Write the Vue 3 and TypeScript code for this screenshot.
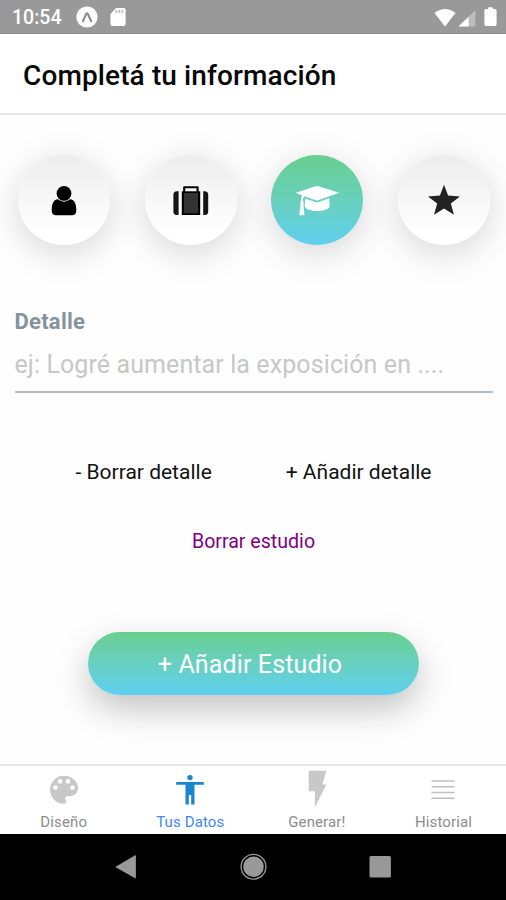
<script setup lang="ts">
import { ref } from 'vue'

type Section = 'person' | 'work' | 'study' | 'extra'
type Tab = 'design' | 'data' | 'generate' | 'history'

const sections: { id: Section; label: string }[] = [
  { id: 'person', label: 'Datos personales' },
  { id: 'work', label: 'Experiencia' },
  { id: 'study', label: 'Estudios' },
  { id: 'extra', label: 'Destacados' },
]
const tabs: { id: Tab; label: string }[] = [
  { id: 'design', label: 'Diseño' },
  { id: 'data', label: 'Tus Datos' },
  { id: 'generate', label: 'Generar!' },
  { id: 'history', label: 'Historial' },
]

const section = ref<Section>('study')
const tab = ref<Tab>('data')
const detail = ref('')
</script>

<template>
  <div class="screen">
    <div class="status">
      <span class="clock">10:54</span>
      <svg class="expo" viewBox="0 0 22 22">
        <circle cx="11" cy="11" r="10.6" fill="#fff" />
        <path d="M7 15.2 10 8.2Q11 6.4 12 8.2L15.2 15.2" fill="none" stroke="#8c8c8c" stroke-width="2.1" stroke-linecap="round" />
      </svg>
      <svg class="sd" viewBox="0 0 16 20">
        <path d="M6 1H13.6Q15.6 1 15.6 3V17Q15.6 19 13.6 19H2.4Q.4 19 .4 17V7Z" fill="#fff" />
        <path d="M6.4 3V6M9.4 3V6M12.4 3V6" stroke="#bbb" stroke-width="1.7" />
      </svg>
      <div class="signals">
        <svg class="wifi" viewBox="0 0 22 19"><path d="M.5 5Q11-3.2 21.5 5L11 18.4Z" fill="#fff" /></svg>
        <svg class="cell" viewBox="0 0 18 17">
          <path d="M17.3.3V16.5H.5Z" fill="#bdbdbd" />
          <path d="M10.6 6.8V16.5H.5Z" fill="#fff" />
        </svg>
        <svg class="battery" viewBox="0 0 13 20"><path d="M4 1Q4 .3 5 .3H8Q9 .3 9 1V2H11Q12.6 2 12.6 3.6V17.2Q12.6 19 11 19H2Q.4 19 .4 17.2V3.6Q.4 2 2 2H4Z" fill="#fff" /></svg>
      </div>
    </div>

    <header class="header"><h1>Completá tu información</h1></header>

    <main class="content">
      <div class="sections">
        <div v-for="s in sections" :key="s.id" class="slot">
          <button class="round" :class="{ active: s.id === section }" :aria-label="s.label" @click="section = s.id">
            <svg viewBox="0 0 92 90">
              <template v-if="s.id === 'person'">
                <circle cx="46" cy="38.4" r="7.4" fill="#000" />
                <path d="M39.8 44.3Q46 49.2 52.2 44.3C56.6 44.5 58.4 49.5 58.3 55.5Q58.2 60.3 54 60.3H38Q33.8 60.3 33.7 55.5C33.6 49.5 35.4 44.5 39.8 44.3Z" fill="#000" />
              </template>
              <template v-else-if="s.id === 'work'">
                <path d="M33.6 36.3V60H32Q28.4 60 28.4 56.5V39.8Q28.4 36.3 32 36.3ZM58.2 36.3V60H59.6Q63.2 60 63.2 56.5V39.8Q63.2 36.3 59.6 36.3Z" fill="#151515" />
                <path d="M39.2 37V32.2H52.6V37" fill="none" stroke="#000" stroke-width="2.1" stroke-linejoin="round" />
                <rect x="36.8" y="36.3" width="18.4" height="23.7" fill="#000" />
                <rect x="38.9" y="38" width="14.1" height="20.3" fill="#333" />
              </template>
              <template v-else-if="s.id === 'study'">
                <path d="M24.7 37.8 44.7 31.3Q46 30.9 47.3 31.3L68.2 37.8 47.3 45.2Q46 45.6 44.7 45.2L33.5 41.3C31.9 42.4 32.1 44.2 32.1 46.2Q33.4 47.6 32.4 49.2L33.4 60.3H28.2L29.6 49.2Q28.5 47.6 30 46.2C30 43.6 30.2 42 31.3 40.6Z" fill="#fff" />
                <path d="M34.1 43.5 44.2 47Q46 47.6 47.8 47L58.3 43.3 58.7 51.2C57.3 57.5 35.2 57.6 33.7 51.2Z" fill="#fff" />
              </template>
              <template v-else>
                <path d="M46 29.7 50.1 40.6 62 41.4 52.8 48.4 56 59.8 46 53.5 36 59.8 39.2 48.4 30 41.4 41.9 40.6Z" fill="#222" />
              </template>
            </svg>
          </button>
        </div>
      </div>

      <label class="field">
        <span class="caption">Detalle</span>
        <input v-model="detail" type="text" placeholder="ej: Logré aumentar la exposición en ...." />
      </label>

      <div class="actions">
        <button class="link remove">- Borrar detalle</button>
        <button class="link add">+ Añadir detalle</button>
      </div>
      <button class="link study">Borrar estudio</button>
      <button class="primary">+ Añadir Estudio</button>
    </main>

    <nav class="tabs">
      <button v-for="t in tabs" :key="t.id" class="tab" :class="[t.id, { current: t.id === tab }]" @click="tab = t.id">
        <svg viewBox="0 0 40 40">
          <path
            v-if="t.id === 'design'"
            transform="translate(1.3 1.1) scale(1.56)"
            d="M12 3c-4.97 0-9 4.03-9 9s4.03 9 9 9c.83 0 1.5-.67 1.5-1.5 0-.39-.15-.74-.39-1.01-.23-.26-.38-.61-.38-.99 0-.83.67-1.5 1.5-1.5H16c2.76 0 5-2.24 5-5 0-4.42-4.03-8-9-8zm-5.5 9c-.83 0-1.5-.67-1.5-1.5S5.67 9 6.5 9 8 9.67 8 10.5 7.33 12 6.5 12zm3-4C8.67 8 8 7.33 8 6.5S8.67 5 9.5 5s1.5.67 1.5 1.5S10.33 8 9.5 8zm5 0c-.83 0-1.5-.67-1.5-1.5S13.67 5 14.5 5s1.5.67 1.5 1.5S15.33 8 14.5 8zm3 4c-.83 0-1.5-.67-1.5-1.5S16.67 9 17.5 9s1.5.67 1.5 1.5-.67 1.5-1.5 1.5z"
            fill="#c8c8c8"
          />
          <g v-else-if="t.id === 'data'" fill="#1a86cf">
            <circle cx="20" cy="7.6" r="2.7" />
            <path d="M6.2 12.1H33.8V14.7H24.5V34.5H21.2V25H18.8V34.5H15.5V14.7H6.2Z" />
          </g>
          <path v-else-if="t.id === 'generate'" d="M11.7.7H29.4L25.3 14.5H29.4L17.9 37.2V21.2H11.7Z" fill="#c8c8c8" />
          <path v-else d="M8.5 11H31.5M8.5 16.8H31.5M8.5 22.5H31.5M8.5 28.2H31.5" stroke="#bebebe" stroke-width="1.5" />
        </svg>
        <span>{{ t.label }}</span>
      </button>
    </nav>

    <div class="system">
      <svg viewBox="0 0 28 28"><path d="M3.2 14 22.7 2.5Q23.9 2 23.9 3.2V24.4Q23.9 25.7 22.7 25.1Z" fill="#999" /></svg>
      <svg viewBox="0 0 28 28">
        <circle cx="14.5" cy="13.7" r="12.4" fill="none" stroke="#999" stroke-width="1.3" />
        <circle cx="14.5" cy="13.7" r="10.3" fill="#999" />
      </svg>
      <svg viewBox="0 0 28 28"><rect x="3.5" y="3" width="21.4" height="21.6" rx="1.5" fill="#999" /></svg>
    </div>
  </div>
</template>

<style>
body { margin: 0; }
</style>

<style scoped>
.screen {
  width: 506px;
  height: 900px;
  display: flex;
  flex-direction: column;
  overflow: hidden;
  background: #fefefe;
  font-family: Roboto, "Liberation Sans", sans-serif;
}
button {
  border: 0;
  padding: 0;
  margin: 0;
  background: none;
  font-family: inherit;
}
svg { display: block; flex: none; }
.status {
  box-sizing: border-box;
  height: 34px;
  flex: none;
  display: flex;
  align-items: center;
  padding: 1px 9px 0 12px;
  background: #999;
  border-bottom: 1px solid #8d8d8d;
}
.clock { width: 64px; color: #fff; font-size: 19.5px; font-weight: 500; line-height: 34px; padding-top: 2px; }
.expo { width: 22px; height: 22px; }
.sd { width: 16px; height: 20px; margin-left: 12px; }
.signals { margin-left: auto; display: flex; align-items: center; }
.wifi { width: 22px; height: 19px; }
.cell { width: 18px; height: 17px; margin: 2px 8px 0 2px; }
.battery { width: 13px; height: 20px; }
.header {
  box-sizing: border-box;
  height: 81px;
  flex: none;
  padding-left: 23px;
  background: #fff;
  border-bottom: 2px solid #e9e9e9;
}
h1 { margin: 0; font-size: 28px; letter-spacing: .12px; line-height: 84px; height: 79px; font-weight: 500; color: #080808; white-space: nowrap; }
.content {
  height: 649px;
  flex: none;
  display: flex;
  flex-direction: column;
  align-items: center;
}
.sections { box-sizing: border-box; width: 100%; display: grid; grid-template-columns: repeat(4, 126.6px); padding: 40px 0 0 .7px; }
.slot { display: flex; justify-content: center; }
.round {
  width: 92px;
  height: 90px;
  border-radius: 50%;
  background: linear-gradient(#ededed, #fff 85%);
  box-shadow: 0 8px 35px rgba(0, 0, 0, .16);
}
.round.active { background: linear-gradient(#68cf8f, #68d0c0 55%, #5fcff0); }
.round svg { width: 92px; height: 90px; }
.field { width: 478px; margin: 62px 0 0 1px; display: flex; flex-direction: column; }
.caption { font-size: 22px; letter-spacing: .25px; line-height: 29px; height: 28px; font-weight: 700; color: #86939e; }
input {
  box-sizing: border-box;
  width: 100%;
  height: 58px;
  padding: 3px 0 0;
  border: 0;
  border-bottom: 2px solid #b6bcc0;
  outline: 0;
  background: none;
  font: 400 25px/53px Roboto, sans-serif;
  letter-spacing: .1px;
}
input::placeholder { color: #c7c7c7; opacity: 1; }
.actions { width: 356px; margin: 64px 0 0 1px; display: flex; justify-content: space-between; }
.link { font-size: 21px; line-height: 30px; color: #111; white-space: nowrap; }
.link.study { margin: 40px 0 0 1px; font-size: 19.6px; color: #800080; }
.primary {
  box-sizing: border-box;
  width: 331px;
  height: 63px;
  margin-top: 75px;
  padding: 3px 6px 0 0;
  border-radius: 32px;
  background: linear-gradient(#68cf8f, #68d0c0 50%, #5fcff0);
  box-shadow: 0 14px 34px rgba(0, 0, 0, .24);
  color: #fff;
  font-size: 25px;
  letter-spacing: .12px;
  line-height: 60px;
}
.tabs {
  box-sizing: border-box;
  height: 70px;
  flex: none;
  display: grid;
  grid-template-columns: repeat(4, 126.6px);
  padding-left: .4px;
  background: #fff;
  border-top: 2px solid #e8e8e8;
}
.tab { display: flex; flex-direction: column; align-items: center; justify-content: flex-start; padding-top: 4px; color: #8c8c8c; }
.tab svg { width: 40px; height: 40px; }
.tab span { font-size: 15px; letter-spacing: .12px; line-height: 20px; margin-top: 2px; }
.tab.current span { color: #4385f5; }
.system {
  height: 66px;
  flex: none;
  display: flex;
  justify-content: center;
  align-items: center;
  gap: 99px;
  background: #000;
}
.system svg { width: 28px; height: 28px; }
</style>
